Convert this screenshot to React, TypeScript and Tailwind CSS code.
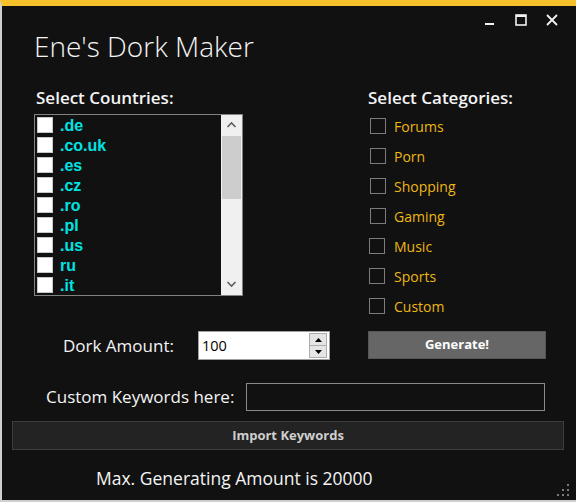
import React from 'react';

const countries = ['.de', '.co.uk', '.es', '.cz', '.ro', '.pl', '.us', 'ru', '.it'];
const categories = ['Forums', 'Porn', 'Shopping', 'Gaming', 'Music', 'Sports', 'Custom'];

function WindowControls() {
    return (
        <div className="ml-auto flex gap-[19px] pt-[8px] pr-[18px]">
            <svg width="12" height="12" viewBox="0 0 12 12">
                <rect x="1" y="9" width="9" height="2" fill="#f2f2f2" />
            </svg>
            <svg width="12" height="12" viewBox="0 0 12 12">
                <rect x="1" y="1" width="10" height="10" fill="none" stroke="#f2f2f2" strokeWidth="1.6" />
                <rect x="1" y="1" width="10" height="2" fill="#f2f2f2" />
            </svg>
            <svg width="12" height="12" viewBox="0 0 12 12">
                <path d="M1 1 L11 11 M11 1 L1 11" stroke="#f2f2f2" strokeWidth="1.8" />
            </svg>
        </div>
    );
}

function CountryList() {
    return (
        <div className="mt-[6px] h-[182px] w-[209px] border border-[#828282] flex">
            <div className="flex-1 flex flex-col">
                {countries.map((c) => (
                    <div key={c} className="h-[20px] flex items-center pl-[2px] gap-[7px]">
                        <div className="w-[16px] h-[16px] bg-white border border-[#c8c8c8]" />
                        <span className="text-[16px] font-bold text-[#00e3e3] font-['Liberation_Sans',sans-serif] leading-none mt-[1px]">
                            {c}
                        </span>
                    </div>
                ))}
            </div>
            {/* scrollbar */}
            <div className="w-[21px] bg-[#f0f0f0] flex flex-col items-center">
                <svg width="21" height="21" viewBox="0 0 21 21">
                    <path d="M6.5 12 L10.5 8 L14.5 12" fill="none" stroke="#606060" strokeWidth="1.6" />
                </svg>
                <div className="w-[19px] h-[63px] bg-[#cdcdcd]" />
                <div className="flex-1" />
                <svg width="21" height="21" viewBox="0 0 21 21">
                    <path d="M6.5 8 L10.5 12 L14.5 8" fill="none" stroke="#606060" strokeWidth="1.6" />
                </svg>
            </div>
        </div>
    );
}

function SpinInput() {
    return (
        <div className="w-[132px] h-[29px] bg-white border border-[#a0a0a0] flex items-center">
            <span className="pl-[3px] flex-1 text-[14.5px] text-black">100</span>
            <div className="w-[18px] h-[25px] mr-[2px] flex flex-col">
                <div className="flex-1 bg-[#e5e5e5] border border-[#adadad] flex items-center justify-center">
                    <svg width="7" height="4" viewBox="0 0 7 4"><path d="M0 4 L3.5 0 L7 4 Z" fill="#000" /></svg>
                </div>
                <div className="flex-1 bg-[#e5e5e5] border border-[#adadad] border-t-0 flex items-center justify-center">
                    <svg width="7" height="4" viewBox="0 0 7 4"><path d="M0 0 L3.5 4 L7 0 Z" fill="#000" /></svg>
                </div>
            </div>
        </div>
    );
}

export default function App() {
    return (
        <div className="relative w-[576px] h-[502px] bg-[#111111] border-t-[6px] border-t-[#f6c12a] border-l-2 border-l-[#cfcfcf] border-b-2 border-b-[#cfcfcf] flex flex-col font-['Open_Sans',sans-serif] text-[#f4f4f4] overflow-hidden">
            {/* Title bar */}
            <div className="h-[82px] flex">
                <h1 className="pl-[32px] pt-[26px] text-[28px] leading-[28px] font-light">Ene's Dork Maker</h1>
                <WindowControls />
            </div>

            {/* Lists */}
            <div className="flex pl-[32px]">
                <div className="w-[209px]">
                    <p className="text-[17px] leading-[20px] font-semibold pl-[2px]">Select Countries:</p>
                    <CountryList />
                </div>
                <div className="ml-[125px]">
                    <p className="text-[17px] leading-[20px] font-semibold">Select Categories:</p>
                    <div className="mt-[3px] flex flex-col">
                        {categories.map((c, i) => (
                            <div key={c} className={`h-[30px] flex items-center ${i > 3 ? 'pl-[1px]' : 'pl-[2px]'}`}>
                                <div className="w-[16px] h-[16px] border-[1.5px] border-[#7c7c7c]" />
                                <span className={`${i > 3 ? 'ml-[9px]' : 'ml-[8px]'} text-[14px] text-[#ecb714]`}>{c}</span>
                            </div>
                        ))}
                    </div>
                </div>
            </div>

            {/* Dork amount row */}
            <div className="mt-[10px] flex items-center">
                <span className="ml-[61px] w-[135px] text-[17px]">Dork Amount:</span>
                <SpinInput />
                <button className="ml-[38px] -mt-[2px] w-[178px] h-[28px] bg-[#666666] border border-[#555555] text-[13px] font-bold text-white">
                    Generate!
                </button>
            </div>

            {/* Custom keywords row */}
            <div className="mt-[23px] flex items-center">
                <span className="ml-[44px] w-[200px] text-[17px]">Custom Keywords here:</span>
                <div className="w-[299px] h-[28px] border border-[#8a8a8a] bg-[#111111]" />
            </div>

            <button className="mt-[10px] ml-[10px] w-[552px] h-[29px] bg-[#232323] border border-[#3c3c3c] text-[13px] font-bold text-[#cfcfcf]">
                Import Keywords
            </button>

            <p className="mt-[15px] ml-[94px] text-[17.5px]">Max. Generating Amount is 20000</p>

            {/* resize grip */}
            <svg className="absolute right-[7px] bottom-[4px]" width="12" height="12" viewBox="0 0 12 12">
                <rect x="10" y="0" width="2" height="2" fill="#7a7a7a" />
                <rect x="5" y="5" width="2" height="2" fill="#7a7a7a" />
                <rect x="10" y="5" width="2" height="2" fill="#7a7a7a" />
                <rect x="0" y="10" width="2" height="2" fill="#7a7a7a" />
                <rect x="5" y="10" width="2" height="2" fill="#7a7a7a" />
                <rect x="10" y="10" width="2" height="2" fill="#7a7a7a" />
            </svg>
        </div>
    );
}
